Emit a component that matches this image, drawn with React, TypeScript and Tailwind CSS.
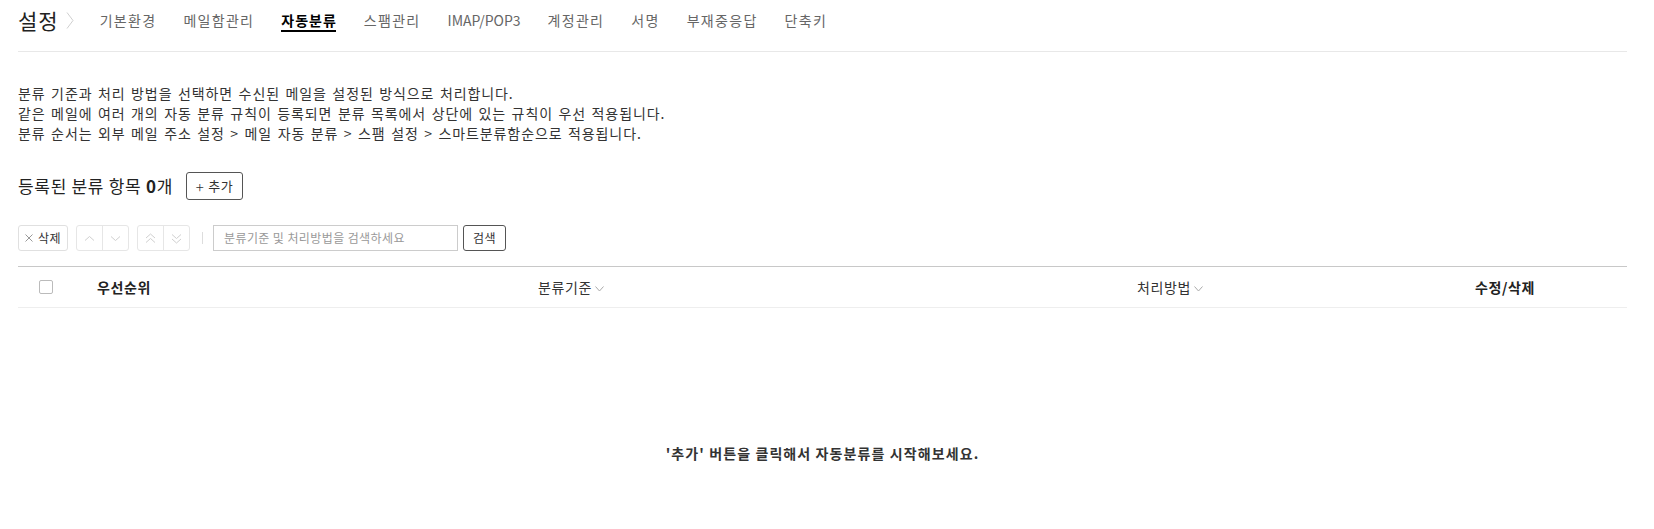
import React from 'react';

const tabs = ['기본환경', '메일함관리', '자동분류', '스팸관리', 'IMAP/POP3', '계정관리', '서명', '부재중응답', '단축키'];
const activeTab = '자동분류';

function ChevronDown({ className = '' }: { className?: string }) {
  return (
    <svg width="9" height="6" viewBox="0 0 9 6" className={className} fill="none">
      <polyline points="0.5,0.5 4.5,5 8.5,0.5" stroke="currentColor" strokeWidth="1" />
    </svg>
  );
}

function Chevron({ dir, double = false }: { dir: 'up' | 'down'; double?: boolean }) {
  const up = dir === 'up';
  return (
    <svg width="11" height="11" viewBox="0 0 11 11" fill="none" className="text-[#d0d0d0]">
      {double ? (
        up ? (
          <>
            <polyline points="1,5 5.5,1 10,5" stroke="currentColor" strokeWidth="1" />
            <polyline points="1,9.5 5.5,5.5 10,9.5" stroke="currentColor" strokeWidth="1" />
          </>
        ) : (
          <>
            <polyline points="1,1.5 5.5,5.5 10,1.5" stroke="currentColor" strokeWidth="1" />
            <polyline points="1,6 5.5,10 10,6" stroke="currentColor" strokeWidth="1" />
          </>
        )
      ) : up ? (
        <polyline points="1,7.5 5.5,3.5 10,7.5" stroke="currentColor" strokeWidth="1" />
      ) : (
        <polyline points="1,3.5 5.5,7.5 10,3.5" stroke="currentColor" strokeWidth="1" />
      )}
    </svg>
  );
}

function MoveGroup({ double = false }: { double?: boolean }) {
  return (
    <div className="flex h-[26px] w-[53px] rounded-[3px] border border-[#e6e6e6]">
      <button className="flex flex-1 items-center justify-center border-r border-[#e6e6e6]">
        <Chevron dir="up" double={double} />
      </button>
      <button className="flex flex-1 items-center justify-center">
        <Chevron dir="down" double={double} />
      </button>
    </div>
  );
}

export default function App() {
  return (
    <div className="min-h-[529px] bg-white pl-[18px] font-['Noto_Sans_CJK_KR',sans-serif] text-[#222]">
      <div className="w-[1609px]">
        {/* Header tabs */}
        <div className="flex h-[52px] items-start border-b border-[#e8e8e8] pt-[7px]">
          <div className="flex h-[26px] items-center">
            <span className="text-[21px] leading-[26px] tracking-[1px] text-[#222]">설정</span>
            <svg width="8" height="17" viewBox="0 0 8 17" fill="none" className="ml-[7px] text-[#cfcfcf]">
              <polyline points="1,0.5 7,8.5 1,16.5" stroke="currentColor" strokeWidth="1" />
            </svg>
          </div>
          <nav className="ml-[26px] flex h-[26px] items-center gap-[27px]">
            {tabs.map((t) => {
              const latin = /^[A-Z]/.test(t);
              return t === activeTab ? (
                <span key={t} className="relative text-[14px] font-bold leading-[20px] tracking-[1px] text-black">
                  {t}
                  <span className="absolute left-0 right-[1px] top-[20px] h-[2px] bg-black" />
                </span>
              ) : (
                <span
                  key={t}
                  className={
                    latin
                      ? 'text-[14px] leading-[20px] text-[#666]'
                      : 'text-[14px] leading-[20px] tracking-[1.3px] text-[#666]'
                  }
                >
                  {t}
                </span>
              );
            })}
          </nav>
        </div>

        {/* Description */}
        <div className="mt-[31px] text-[14px] leading-[20px] tracking-[0.9px] text-[#333] [word-spacing:1.5px]">
          <p>분류 기준과 처리 방법을 선택하면 수신된 메일을 설정된 방식으로 처리합니다.</p>
          <p>같은 메일에 여러 개의 자동 분류 규칙이 등록되면 분류 목록에서 상단에 있는 규칙이 우선 적용됩니다.</p>
          <p>분류 순서는 외부 메일 주소 설정 &gt; 메일 자동 분류 &gt; 스팸 설정 &gt; 스마트분류함순으로 적용됩니다.</p>
        </div>

        {/* Count + add */}
        <div className="mt-[29px] flex h-[28px] items-center">
          <span className="text-[17px] leading-[22px] tracking-[0.7px] text-[#222]">
            등록된 분류 항목 <b className="font-bold">0</b>개
          </span>
          <button className="ml-[13px] flex h-[28px] w-[57px] items-center justify-center rounded-[3px] border border-[#555] text-[13px] tracking-[0.5px] text-[#333]">
            <span className="mr-[4px] text-[15px] font-light leading-none">+</span>추가
          </button>
        </div>

        {/* Toolbar */}
        <div className="mt-[25px] flex h-[26px] items-center">
          <button className="flex h-[26px] w-[50px] items-center justify-center rounded-[3px] border border-[#e0e0e0] text-[12px] tracking-[0.5px] text-[#333]">
            <svg width="8" height="8" viewBox="0 0 8 8" className="mr-[5px] text-[#999]" fill="none">
              <path d="M0.5 0.5 L7.5 7.5 M7.5 0.5 L0.5 7.5" stroke="currentColor" strokeWidth="1" />
            </svg>
            삭제
          </button>
          <div className="ml-[8px]">
            <MoveGroup />
          </div>
          <div className="ml-[8px]">
            <MoveGroup double />
          </div>
          <div className="ml-[12px] h-[12px] w-px bg-[#ddd]" />
          <div className="ml-[10px] flex h-[26px] w-[245px] items-center border border-[#ccc] pl-[10px] text-[12px] tracking-[0.4px] text-[#999]">
            분류기준 및 처리방법을 검색하세요
          </div>
          <button className="ml-[5px] flex h-[26px] w-[43px] items-center justify-center rounded-[3px] border border-[#555] text-[12px] tracking-[0.5px] text-[#333]">
            검색
          </button>
        </div>

        {/* Table header */}
        <div className="mt-[15px] grid h-[42px] grid-cols-[56px_111px_772px_426px_1fr] items-center border-y border-t-[#c8c8c8] border-b-[#eeeeee] text-[14px] tracking-[0.6px]">
          <div className="flex justify-center">
            <span className="block h-[14px] w-[14px] rounded-[2px] border border-[#bbb] bg-white" />
          </div>
          <div className="pl-[23px] font-bold text-[#222]">우선순위</div>
          <div className="flex items-center justify-center text-[#333]">
            분류기준
            <ChevronDown className="ml-[3px] mt-[3px] text-[#aaa]" />
          </div>
          <div className="flex items-center justify-center text-[#333]">
            처리방법
            <ChevronDown className="ml-[3px] mt-[3px] text-[#aaa]" />
          </div>
          <div className="text-center font-bold text-[#222]">수정/삭제</div>
        </div>

        {/* Empty state */}
        <div className="pt-[135px] pb-[64px] text-center text-[14px] font-bold leading-[20px] tracking-[1.1px] text-[#333]">
          '추가' 버튼을 클릭해서 자동분류를 시작해보세요.
        </div>
      </div>
    </div>
  );
}
